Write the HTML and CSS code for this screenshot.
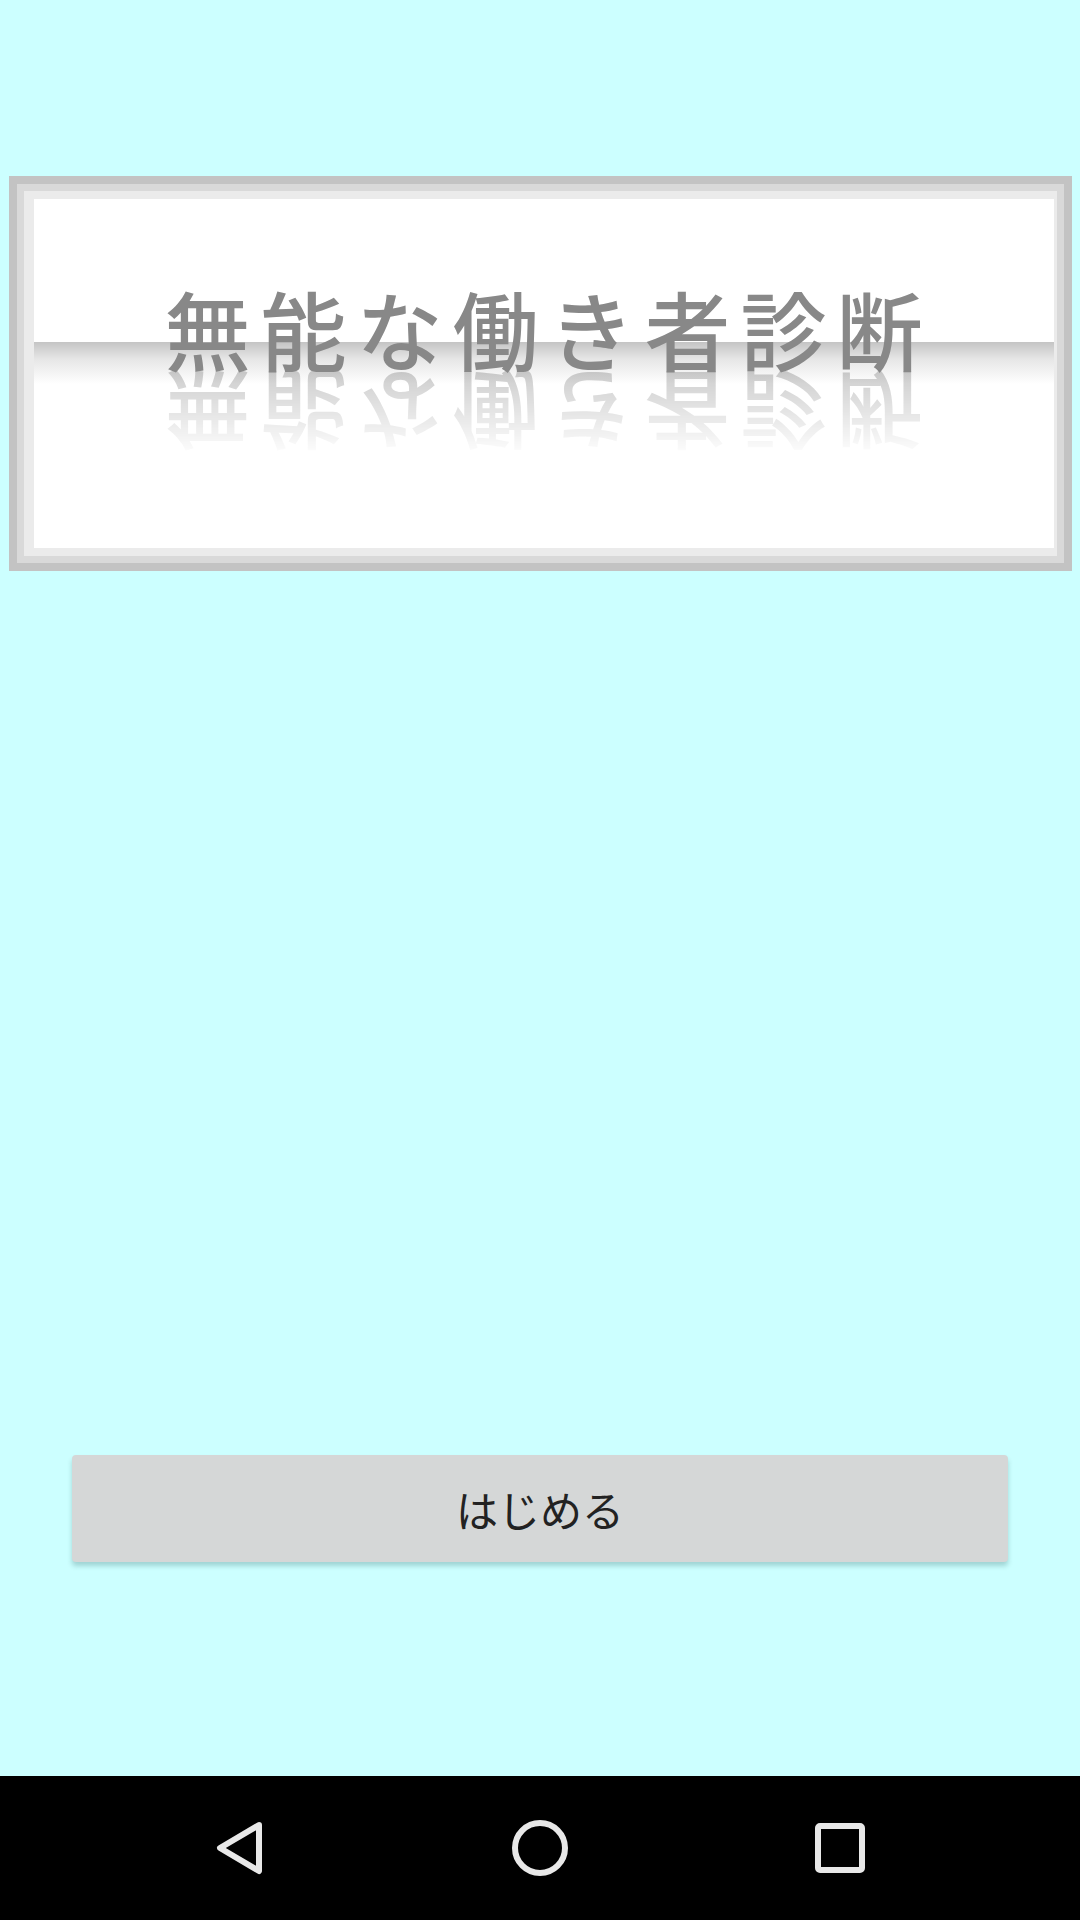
FILE: index.html
```html
<!DOCTYPE html>
<html lang="ja">
<head>
<meta charset="utf-8">
<title>無能な働き者診断</title>
<link rel="stylesheet" href="styles.css">
</head>
<body>
<div class="screen">
  <main class="content">
    <section class="banner">
      <div class="frame-mid">
        <div class="frame-inner">
          <div class="face">
            <h1 class="title">無能な働き者診断</h1>
          </div>
        </div>
      </div>
    </section>
    <button class="start" type="button">はじめる</button>
  </main>
  <nav class="navbar">
    <div class="nav-btn">
      <svg viewBox="0 0 100 100" width="100" height="100"><path d="M69 27 L30 50 L69 73 Z" fill="none" stroke="#e8e8e8" stroke-width="6" stroke-linejoin="round"/></svg>
    </div>
    <div class="nav-btn">
      <svg viewBox="0 0 100 100" width="100" height="100"><circle cx="50" cy="50" r="25" fill="none" stroke="#e8e8e8" stroke-width="6"/></svg>
    </div>
    <div class="nav-btn">
      <svg viewBox="0 0 100 100" width="100" height="100"><rect x="28" y="28" width="44" height="44" rx="2" fill="none" stroke="#e8e8e8" stroke-width="6"/></svg>
    </div>
  </nav>
</div>
</body>
</html>
```

FILE: styles.css
```css
html, body {
  margin: 0;
  padding: 0;
}
body {
  width: 1080px;
  height: 1920px;
  overflow: hidden;
  background: #ccffff;
  font-family: "Noto Sans CJK JP", "Noto Sans", sans-serif;
}
.screen {
  display: flex;
  flex-direction: column;
  width: 1080px;
  height: 1920px;
}
.content {
  flex: 1;
  display: flex;
  flex-direction: column;
  align-items: center;
  padding-top: 176px;
  box-sizing: border-box;
}
.banner {
  box-sizing: border-box;
  width: 1063px;
  height: 395px;
  border: 8px solid #c3c3c3;
  display: flex;
}
.frame-mid {
  flex: 1;
  display: flex;
  border: 7px solid #d9d9d9;
}
.frame-inner {
  flex: 1;
  display: flex;
  border-style: solid;
  border-color: #ebebeb;
  border-width: 8px 3px 8px 10px;
}
.face {
  flex: 1;
  display: flex;
  flex-direction: column;
  align-items: center;
  background: linear-gradient(to bottom, #ffffff 0, #ffffff 143px, #c4c4c4 143px, #e6e6e6 160px, #ffffff 185px, #ffffff 100%);
  padding-top: 86px;
  box-sizing: border-box;
}
.title {
  margin: 0;
  font-size: 86px;
  font-weight: 500;
  line-height: 1;
  letter-spacing: 10px;
  margin-right: -10px;
  color: #888888;
  white-space: nowrap;
  -webkit-box-reflect: below 0 linear-gradient(to bottom, transparent 0%, rgba(0,0,0,0.42) 100%);
}
.start {
  margin-top: 884px;
  width: 936px;
  height: 107px;
  border: none;
  border-radius: 4px;
  background: #d5d7d7;
  box-shadow: 0 4px 5px rgba(0, 60, 60, 0.22);
  font-family: "Noto Sans CJK JP", "Noto Sans", sans-serif;
  font-size: 42px;
  color: #222222;
  padding: 0;
}
.navbar {
  height: 144px;
  background: #000000;
  display: flex;
  align-items: center;
  justify-content: center;
  gap: 200px;
}
.nav-btn {
  width: 100px;
  height: 100px;
  display: flex;
}
.nav-btn svg {
  display: block;
}
```
